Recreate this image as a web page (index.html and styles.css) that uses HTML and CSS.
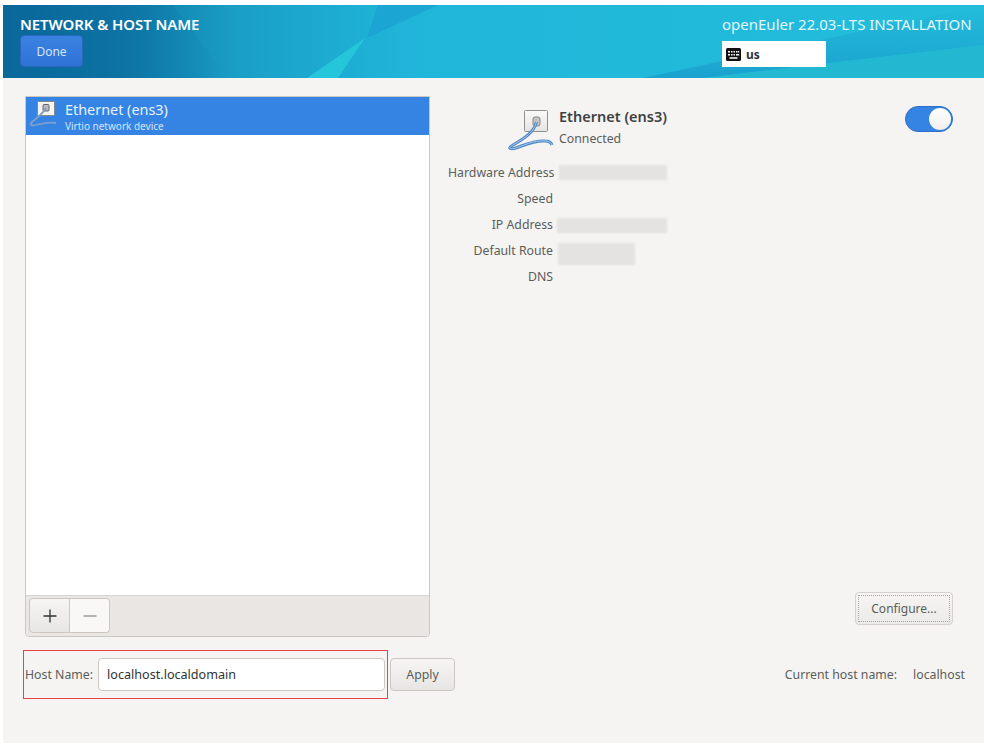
FILE: index.html
```html
<!DOCTYPE html>
<html lang="en">
<head>
<meta charset="utf-8">
<title>Network &amp; Host Name</title>
<link rel="stylesheet" href="styles.css">
</head>
<body>
<div class="app">
  <header class="topbar">
    <svg class="topbar-art" viewBox="0 0 981 73" preserveAspectRatio="none" aria-hidden="true">
      <defs>
        <linearGradient id="sky" x1="0" y1="0" x2="1" y2="0">
          <stop offset="0" stop-color="#0a6f9f"/>
          <stop offset="0.13" stop-color="#0f7cab"/>
          <stop offset="0.24" stop-color="#1a9fc7"/>
          <stop offset="0.42" stop-color="#20b6da"/>
          <stop offset="1" stop-color="#23bddb"/>
        </linearGradient>
        <linearGradient id="shade" x1="0" y1="0" x2="1" y2="0">
          <stop offset="0" stop-color="#0a6498" stop-opacity="0.7"/>
          <stop offset="1" stop-color="#0a6498" stop-opacity="0"/>
        </linearGradient>
        <linearGradient id="band" x1="0" y1="0" x2="0" y2="1">
          <stop offset="0" stop-color="#1ba2cf" stop-opacity="0"/>
          <stop offset="1" stop-color="#1ba2cf" stop-opacity="1"/>
        </linearGradient>
      </defs>
      <rect width="981" height="73" fill="url(#sky)"/>
      <polygon points="0,0 170,0 225,73 0,73" fill="url(#shade)"/>
      <polygon points="375,0 435,0 364,33" fill="#1a9fd0" opacity="0.7"/>
      <polygon points="304,73 362,33 335,73" fill="#25c6da"/>
      <polygon points="640,73 981,0 981,40 700,73" fill="url(#band)"/>
      <polygon points="700,73 981,40 981,73" fill="#22b8d2"/>
    </svg>
    <div class="topbar-left">
      <h1 class="page-title">NETWORK &amp; HOST NAME</h1>
      <button class="done-button" type="button">Done</button>
    </div>
    <div class="topbar-right">
      <div class="product-title">openEuler 22.03-LTS INSTALLATION</div>
      <div class="layout-indicator">
        <svg class="keyboard-icon" viewBox="0 0 15 13" aria-hidden="true">
          <rect width="15" height="13" rx="1.5" fill="#111"/>
          <path d="M2 3h2v1.500H2zM5 3h1.500v1.500H5zM7.500 3H9v1.500H7.500zM10 3h1.500v1.500H10zM12 3h1.200v1.500H12zM2 6h2v1.500H2zM5 6h1.500v1.500H5zM7.500 6H9v1.500H7.500zM10 6h3.200v1.500H10zM3.500 9.300h8v1.500h-8z" fill="#fff"/>
        </svg>
        <span class="layout-name">us</span>
      </div>
    </div>
  </header>

  <main class="content">
    <div class="columns">
      <section class="device-panel">
        <ul class="device-list">
          <li class="device-row">
            <svg class="device-row-icon" viewBox="0 0 36 32" aria-hidden="true">
              <rect x="8.500" y="1.500" width="17" height="14" rx="1" fill="#f5f5f4" stroke="#888"/>
              <rect x="14" y="4.500" width="6" height="6.500" rx="1" fill="#bbb" stroke="#666"/>
              <path d="M17 8C14 14 6 19 2 23C0 26 4 26 9 24.500C15 23 22 22 27 23" fill="none" stroke="#7f9fc9" stroke-width="1.800"/>
            </svg>
            <div class="device-row-text">
              <div class="device-row-name">Ethernet (ens3)</div>
              <div class="device-row-desc">Virtio network device</div>
            </div>
          </li>
        </ul>
        <div class="list-toolbar">
          <div class="button-group">
            <button class="tool-button tool-add" type="button" aria-label="Add">
              <svg viewBox="0 0 14 14" aria-hidden="true"><path d="M7 0.500v13M0.500 7h13" stroke="#2e3436" stroke-width="1.300" fill="none"/></svg>
            </button>
            <button class="tool-button tool-remove" type="button" aria-label="Remove">
              <svg viewBox="0 0 14 14" aria-hidden="true"><path d="M0.500 7h13" stroke="#9a9c9a" stroke-width="1.300" fill="none"/></svg>
            </button>
          </div>
        </div>
      </section>

      <section class="details">
        <div class="details-head">
          <div class="details-summary">
            <svg class="details-icon" viewBox="0 0 50 50" aria-hidden="true">
              <defs>
                <linearGradient id="card" x1="0" y1="0" x2="0" y2="1">
                  <stop offset="0" stop-color="#fafafa"/>
                  <stop offset="1" stop-color="#e4e4e2"/>
                </linearGradient>
              </defs>
              <rect x="19.500" y="6.500" width="23" height="21" rx="1" fill="url(#card)" stroke="#8f8f8d"/>
              <rect x="28" y="13" width="7" height="9" rx="2" fill="#c3c3c1" stroke="#8a8a88"/>
              <path d="M31.500 18C29 28 20 34 8 41C3 44 4 45.500 9 44.500C18 42 28 36 40 37C43 37 46 38 47 41" fill="none" stroke="#4f86c6" stroke-width="3"/>
              <path d="M31.500 18C29 28 20 34 8 41C3 44 4 45.500 9 44.500C18 42 28 36 40 37C43 37 46 38 47 41" fill="none" stroke="#a9c8e8" stroke-width="1"/>
            </svg>
            <div class="details-names">
              <div class="details-name">Ethernet (ens3)</div>
              <div class="details-status">Connected</div>
            </div>
          </div>
          <div class="switch"><span class="switch-knob"></span></div>
        </div>
        <dl class="props">
          <dt>Hardware Address</dt><dd><span class="blur blur-hw"></span></dd>
          <dt>Speed</dt><dd></dd>
          <dt>IP Address</dt><dd><span class="blur blur-ip"></span></dd>
          <dt>Default Route</dt><dd><span class="blur blur-route"></span></dd>
          <dt>DNS</dt><dd></dd>
        </dl>
        <div class="details-actions">
          <button class="configure-button" type="button"><span>Configure...</span></button>
        </div>
      </section>
    </div>

    <div class="host-row">
      <div class="host-box">
        <label class="host-label" for="hostname">Host Name:</label>
        <input class="host-input" id="hostname" type="text" value="localhost.localdomain">
      </div>
      <button class="apply-button" type="button">Apply</button>
      <div class="current-host">
        <span>Current host name:</span>
        <span>localhost</span>
      </div>
    </div>
  </main>
</div>
</body>
</html>
```
FILE: styles.css
```css
* { box-sizing: border-box; }
html, body { margin: 0; height: 100%; background: #fff; }
body {
  font-family: "Noto Sans", "Open Sans", sans-serif;
  font-size: 12.3px;
  color: #5b5d5a;
  overflow: hidden;
}
.app {
  margin: 5px 0 0 3px;
  height: 738px;
  display: flex;
  flex-direction: column;
  background: #f5f4f2;
}
.topbar {
  position: relative;
  height: 73px;
  flex: none;
  display: flex;
  justify-content: space-between;
  overflow: hidden;
}
.topbar-art {
  position: absolute;
  inset: 0;
  width: 100%;
  height: 100%;
}
.topbar-left, .topbar-right { position: relative; }
.topbar-left { padding: 10px 0 0 17px; }
.page-title {
  margin: 0;
  font-size: 15px;
  line-height: 18px;
  font-weight: 600;
  letter-spacing: -0.1px;
  color: #fff;
}
.done-button {
  display: block;
  width: 63px;
  height: 32px;
  margin-top: 2px;
  padding: 0;
  border: 1px solid #2a67bd;
  border-radius: 4px;
  background: linear-gradient(#3a82e2, #2f72d6);
  font: inherit;
  font-size: 12px;
  color: #d5e5f8;
}
.topbar-right { width: 262px; padding-top: 10px; }
.product-title {
  font-size: 15px;
  line-height: 18px;
  color: #e3f6fa;
  white-space: nowrap;
}
.layout-indicator {
  width: 104px;
  height: 26px;
  margin-top: 8px;
  padding-left: 4px;
  display: flex;
  align-items: center;
  gap: 5px;
  background: #fff;
}
.keyboard-icon { width: 15px; height: 13px; }
.layout-name { font-size: 12px; font-weight: 700; color: #2e3436; }

.content {
  flex: 1;
  display: flex;
  flex-direction: column;
  padding: 18px 19px 44px 22px;
}
.columns { display: flex; height: 541px; }
.device-panel {
  width: 405px;
  flex: none;
  display: flex;
  flex-direction: column;
  border: 1px solid #cdc7c2;
  border-radius: 0 0 4px 4px;
  overflow: hidden;
}
.device-list {
  flex: 1;
  margin: 0;
  padding: 0;
  list-style: none;
  background: #fff;
}
.device-row {
  height: 38px;
  display: flex;
  align-items: center;
  padding-left: 3px;
  background: #3584e4;
  color: #e9f1fb;
}
.device-row-icon { width: 36px; height: 32px; flex: none; }
.device-row-text { padding-top: 2px; }
.device-row-name { font-size: 14.4px; line-height: 17px; }
.device-row-desc { margin-top: 2px; font-size: 10px; line-height: 13px; color: #d3e3f8; }
.list-toolbar {
  height: 41px;
  flex: none;
  padding: 2px 3px;
  background: #e9e6e3;
  border-top: 1px solid #d8d4d0;
}
.button-group { display: flex; width: 81px; height: 35px; }
.tool-button {
  flex: 1;
  padding: 0;
  display: flex;
  align-items: center;
  justify-content: center;
  border: 1px solid #cdc7c2;
}
.tool-button svg { width: 14px; height: 14px; }
.tool-add {
  border-radius: 4px 0 0 4px;
  background: linear-gradient(#f6f5f4, #e8e6e3);
}
.tool-remove {
  border-left: 0;
  border-radius: 0 4px 4px 0;
  background: #f9f8f7;
}

.details {
  flex: 1;
  display: flex;
  flex-direction: column;
  padding-top: 8px;
}
.details-head {
  display: flex;
  justify-content: space-between;
  padding-right: 12px;
}
.details-summary {
  display: flex;
  margin-left: 75px;
  gap: 4px;
}
.details-icon { width: 50px; height: 50px; flex: none; }
.details-names { padding-top: 4px; }
.details-name {
  font-size: 14.5px;
  line-height: 17px;
  font-weight: 600;
  color: #3f4242;
}
.details-status { margin-top: 5px; font-size: 12.3px; line-height: 17px; }
.switch {
  width: 48px;
  height: 26px;
  margin-top: 2px;
  padding: 1px;
  display: flex;
  justify-content: flex-end;
  border: 1px solid #2c6fc4;
  border-radius: 13px;
  background: #3584e4;
}
.switch-knob {
  width: 22px;
  height: 22px;
  border-radius: 50%;
  background: linear-gradient(#fff, #f0efed);
}
.props {
  margin: 6px 0 0 18px;
  display: grid;
  grid-template-columns: 105px 1fr;
  grid-auto-rows: 26px;
  column-gap: 4px;
  line-height: 26px;
}
.props dt { text-align: right; white-space: nowrap; }
.props dd { margin: 0; position: relative; }
.blur {
  position: absolute;
  display: block;
  background: #e4e3e1;
  filter: blur(1px);
}
.blur-hw { left: 2px; top: 5px; width: 108px; height: 15px; }
.blur-ip { left: 0; top: 6px; width: 110px; height: 15px; }
.blur-route { left: 1px; top: 5px; width: 77px; height: 22px; }
.details-actions {
  margin-top: auto;
  display: flex;
  justify-content: flex-end;
  padding: 0 12px 12px 0;
}
.configure-button {
  width: 98px;
  height: 33px;
  padding: 2px;
  border: 1px solid #d5d1cc;
  border-radius: 4px;
  background: linear-gradient(#f6f5f4, #eceae7);
  font: inherit;
  font-size: 12px;
  color: #5b5d5a;
}
.configure-button span {
  display: flex;
  align-items: center;
  justify-content: center;
  height: 100%;
  border: 1px dotted #a8a6a2;
}
.host-row {
  margin: 13px 0 0 -2px;
  display: flex;
  align-items: center;
}
.host-box {
  width: 365px;
  height: 49px;
  display: flex;
  align-items: center;
  padding: 0 2px 0 1px;
  gap: 5px;
  border: 1px solid #e8434a;
}
.host-label { white-space: nowrap; }
.host-input {
  flex: 1;
  min-width: 0;
  height: 33px;
  padding: 0 8px;
  border: 1px solid #cdc7c2;
  border-radius: 4px;
  background: #fff;
  font: inherit;
  font-size: 12.6px;
  color: #2e3436;
  outline: none;
}
.apply-button {
  width: 65px;
  height: 33px;
  margin-left: 2px;
  padding: 0;
  border: 1px solid #cdc7c2;
  border-radius: 4px;
  background: linear-gradient(#f6f5f4, #e8e6e3);
  font: inherit;
  color: #5b5d5a;
}
.current-host {
  margin-left: auto;
  display: flex;
  gap: 16px;
}
```
